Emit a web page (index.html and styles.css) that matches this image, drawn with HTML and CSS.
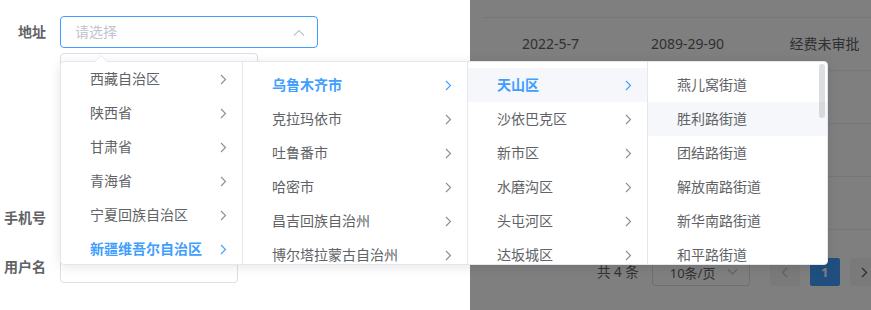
FILE: index.html
```html
<!DOCTYPE html>
<html lang="zh-CN">
<head>
<meta charset="utf-8">
<title>级联选择</title>
<link rel="stylesheet" href="styles.css">
</head>
<body>
<div class="page">
  <section class="form-pane">
    <div class="form-row row-address">
      <label class="form-label">地址</label>
      <div class="select-input is-focus">
        <span class="placeholder">请选择</span>
        <svg class="select-arrow" width="12" height="7" viewBox="0 0 12 7"><path d="M1 6.5 L6 1.5 L11 6.5" fill="none" stroke="#c0c4cc" stroke-width="1.2"/></svg>
      </div>
    </div>
    <div class="ghost-box"></div>
    <div class="form-row row-phone">
      <label class="form-label">手机号</label>
      <div class="text-input"></div>
    </div>
    <div class="form-row row-user">
      <label class="form-label">用户名</label>
      <div class="text-input"></div>
    </div>
  </section>

  <section class="table-pane">
    <div class="table">
      <div class="tr thead">
        <div class="td">开始日期</div>
        <div class="td">结束日期</div>
        <div class="td">审批人</div>
      </div>
      <div class="tr">
        <div class="td">2022-5-7</div>
        <div class="td">2089-29-90</div>
        <div class="td">经费未审批</div>
      </div>
      <div class="tr"><div class="td"></div><div class="td"></div><div class="td"></div></div>
      <div class="tr"><div class="td"></div><div class="td"></div><div class="td"></div></div>
      <div class="tr"><div class="td"></div><div class="td"></div><div class="td"></div></div>
    </div>
    <div class="pagination">
      <span class="total">共 4 条</span>
      <div class="sizes">
        <span>10条/页</span>
        <svg width="11" height="6" viewBox="0 0 11 6"><path d="M1 0.5 L5.5 5 L10 0.5" fill="none" stroke="#c0c4cc" stroke-width="1.1"/></svg>
      </div>
      <button class="pg-btn"><svg width="7" height="11" viewBox="0 0 7 11"><path d="M6 1 L1.5 5.5 L6 10" fill="none" stroke="#c0c4cc" stroke-width="1.4"/></svg></button>
      <button class="pg-btn active">1</button>
      <button class="pg-btn"><svg width="7" height="11" viewBox="0 0 7 11"><path d="M1 1 L5.5 5.5 L1 10" fill="none" stroke="#606266" stroke-width="1.4"/></svg></button>
    </div>
  </section>

  <div class="cascader-popper">
    <div class="menu menu-1">
      <div class="node">西藏自治区<svg class="chev" width="7" height="11" viewBox="0 0 7 11"><path d="M1 1 L5.5 5.5 L1 10"/></svg></div>
      <div class="node">陕西省<svg class="chev" width="7" height="11" viewBox="0 0 7 11"><path d="M1 1 L5.5 5.5 L1 10"/></svg></div>
      <div class="node">甘肃省<svg class="chev" width="7" height="11" viewBox="0 0 7 11"><path d="M1 1 L5.5 5.5 L1 10"/></svg></div>
      <div class="node">青海省<svg class="chev" width="7" height="11" viewBox="0 0 7 11"><path d="M1 1 L5.5 5.5 L1 10"/></svg></div>
      <div class="node">宁夏回族自治区<svg class="chev" width="7" height="11" viewBox="0 0 7 11"><path d="M1 1 L5.5 5.5 L1 10"/></svg></div>
      <div class="node is-active">新疆维吾尔自治区<svg class="chev" width="7" height="11" viewBox="0 0 7 11"><path d="M1 1 L5.5 5.5 L1 10"/></svg></div>
    </div>
    <div class="menu menu-2">
      <div class="node is-active">乌鲁木齐市<svg class="chev" width="7" height="11" viewBox="0 0 7 11"><path d="M1 1 L5.5 5.5 L1 10"/></svg></div>
      <div class="node">克拉玛依市<svg class="chev" width="7" height="11" viewBox="0 0 7 11"><path d="M1 1 L5.5 5.5 L1 10"/></svg></div>
      <div class="node">吐鲁番市<svg class="chev" width="7" height="11" viewBox="0 0 7 11"><path d="M1 1 L5.5 5.5 L1 10"/></svg></div>
      <div class="node">哈密市<svg class="chev" width="7" height="11" viewBox="0 0 7 11"><path d="M1 1 L5.5 5.5 L1 10"/></svg></div>
      <div class="node">昌吉回族自治州<svg class="chev" width="7" height="11" viewBox="0 0 7 11"><path d="M1 1 L5.5 5.5 L1 10"/></svg></div>
      <div class="node">博尔塔拉蒙古自治州<svg class="chev" width="7" height="11" viewBox="0 0 7 11"><path d="M1 1 L5.5 5.5 L1 10"/></svg></div>
    </div>
    <div class="menu menu-3">
      <div class="node is-active is-hover">天山区<svg class="chev" width="7" height="11" viewBox="0 0 7 11"><path d="M1 1 L5.5 5.5 L1 10"/></svg></div>
      <div class="node">沙依巴克区<svg class="chev" width="7" height="11" viewBox="0 0 7 11"><path d="M1 1 L5.5 5.5 L1 10"/></svg></div>
      <div class="node">新市区<svg class="chev" width="7" height="11" viewBox="0 0 7 11"><path d="M1 1 L5.5 5.5 L1 10"/></svg></div>
      <div class="node">水磨沟区<svg class="chev" width="7" height="11" viewBox="0 0 7 11"><path d="M1 1 L5.5 5.5 L1 10"/></svg></div>
      <div class="node">头屯河区<svg class="chev" width="7" height="11" viewBox="0 0 7 11"><path d="M1 1 L5.5 5.5 L1 10"/></svg></div>
      <div class="node">达坂城区<svg class="chev" width="7" height="11" viewBox="0 0 7 11"><path d="M1 1 L5.5 5.5 L1 10"/></svg></div>
    </div>
    <div class="menu menu-4">
      <div class="node">燕儿窝街道</div>
      <div class="node is-hover">胜利路街道</div>
      <div class="node">团结路街道</div>
      <div class="node">解放南路街道</div>
      <div class="node">新华南路街道</div>
      <div class="node">和平路街道</div>
      <div class="scrollbar"></div>
    </div>
  </div>
</div>
</body>
</html>
```
FILE: styles.css
```css
* { box-sizing: border-box; }
html, body {
  margin: 0;
  padding: 0;
  width: 871px;
  height: 310px;
  overflow: hidden;
  background: #fff;
  font-family: "Noto Sans", "Noto Sans CJK SC", sans-serif;
  font-size: 14px;
  color: #606266;
}
.page {
  position: relative;
  display: flex;
  width: 871px;
  height: 310px;
}

/* ---------- form ---------- */
.form-pane {
  width: 470px;
  flex: none;
  background: #fff;
  display: flex;
  flex-direction: column;
}
.form-row {
  display: flex;
  align-items: center;
  height: 32px;
}
.row-address { margin-top: 16px; }
.row-phone { margin-top: 9px; }
.row-user { margin-top: 17px; }
.form-label {
  width: 60px;
  padding-right: 14px;
  text-align: right;
  font-weight: 700;
  color: #606266;
  line-height: 32px;
  white-space: nowrap;
}
.select-input {
  position: relative;
  width: 258px;
  height: 32px;
  border: 1px solid #409eff;
  border-radius: 4px;
  display: flex;
  align-items: center;
  padding: 0 30px 0 14px;
}
.placeholder { color: #c0c4cc; line-height: 20px; }
.select-arrow {
  position: absolute;
  right: 12px;
  top: 12px;
}
.ghost-box {
  margin: 5px 0 0 60px;
  width: 198px;
  height: 140px;
  border: 1px solid #dcdfe6;
  border-radius: 4px;
}
.text-input {
  width: 178px;
  height: 32px;
  border: 1px solid #dcdfe6;
  border-radius: 4px;
}

/* ---------- table (under mask) ---------- */
.table-pane {
  position: relative;
  flex: 1;
  background: #fff;
  overflow: hidden;
}
.table-pane::after {
  content: "";
  position: absolute;
  inset: 0;
  background: rgba(0, 0, 0, 0.5);
}
.table {
  margin-top: -30px;
  padding-left: 12px;
}
.tr {
  display: flex;
  height: 53px;
  border-bottom: 1px solid #ebeef5;
}
.td {
  width: 137px;
  flex: none;
  display: flex;
  align-items: center;
  justify-content: center;
  line-height: 20px;
  color: #606266;
  white-space: nowrap;
}
.thead {
  height: 48px;
}
.thead .td {
  align-items: flex-end;
  padding-bottom: 14px;
  color: #909399;
  font-weight: 700;
}
.pagination {
  display: flex;
  align-items: center;
  margin-top: 28px;
  padding-left: 127px;
  font-size: 13px;
  white-space: nowrap;
}
.pagination > * { flex: none; }
.total {
  color: #606266;
  margin-right: 13px;
  line-height: 28px;
  font-size: 13.5px;
}
.sizes {
  width: 98px;
  height: 28px;
  border: 1px solid #dcdfe6;
  border-radius: 3px;
  display: flex;
  align-items: center;
  justify-content: space-between;
  padding: 0 11px 0 17px;
  color: #606266;
  margin-right: 15px;
  font-size: 13px;
}
.pg-btn {
  width: 30px;
  height: 28px;
  margin: 0 5px;
  border: none;
  border-radius: 2px;
  background: #f4f4f5;
  color: #606266;
  font: 700 13px "Noto Sans", sans-serif;
  display: flex;
  align-items: center;
  justify-content: center;
  padding: 0;
}
.pg-btn.active {
  background: #409eff;
  color: #fff;
}

/* ---------- cascader popper ---------- */
.cascader-popper {
  position: absolute;
  left: 60px;
  top: 61px;
  z-index: 10;
  width: 768px;
  height: 204px;
  display: flex;
  background: #fff;
  border: 1px solid #e4e7ed;
  border-radius: 4px;
  box-shadow: 0 2px 12px rgba(0, 0, 0, 0.1);
}
.cascader-popper::before,
.cascader-popper::after {
  content: "";
  position: absolute;
  left: 34px;
  width: 0;
  height: 0;
  border: 6px solid transparent;
  border-top-width: 0;
}
.cascader-popper::before {
  top: -7px;
  border-bottom: 6px solid #e4e7ed;
}
.cascader-popper::after {
  top: -6px;
  border-bottom: 6px solid #fff;
}
.menu {
  position: relative;
  height: 100%;
  overflow: hidden;
  border-right: 1px solid #e4e7ed;
  padding-top: 6px;
  flex: none;
}
.menu-1 { width: 182px; padding-top: 0; }
.menu-2 { width: 225px; }
.menu-3 { width: 180px; }
.menu-4 { width: 179px; border-right: none; }
.node {
  position: relative;
  height: 34px;
  line-height: 34px;
  padding: 0 30px 0 29px;
  color: #606266;
  white-space: nowrap;
}
.node.is-active {
  color: #409eff;
  font-weight: 700;
}
.node.is-hover {
  background: #f5f7fa;
}
.chev {
  position: absolute;
  right: 15px;
  top: 12px;
  fill: none;
  stroke: #8b8d92;
  stroke-width: 1.1;
}
.node.is-active .chev { stroke: #409eff; }
.scrollbar {
  position: absolute;
  right: 2px;
  top: 2px;
  width: 6px;
  height: 54px;
  border-radius: 3px;
  background: rgba(144, 147, 153, 0.3);
}
```
